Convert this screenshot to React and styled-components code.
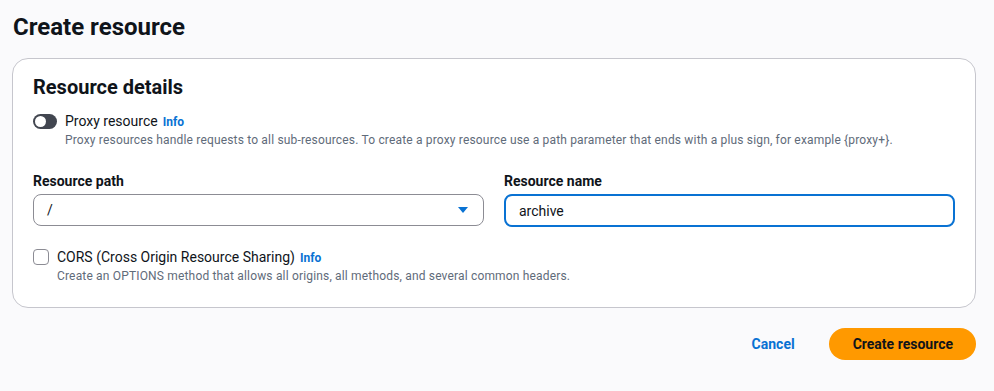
import React from 'react'
import styled, { createGlobalStyle } from 'styled-components'

const Global = createGlobalStyle`
  html, body { margin: 0; padding: 0; background: #fafafc; }
  body { font-family: Roboto, "Noto Sans", sans-serif; color: #0f141a; }
  * { box-sizing: border-box; }
`

const Page = styled.div`
  padding: 12px 18px 0 12px;
  display: flex;
  flex-direction: column;
`

const Title = styled.h1`
  margin: 0 0 0 1px;
  font-size: 24px;
  line-height: 30px;
  font-weight: 700;
`

const Card = styled.section`
  margin-top: 16px;
  background: #fff;
  border: 1px solid #c6c6cd;
  border-radius: 16px;
  padding: 16px 20px 23px 20px;
  display: flex;
  flex-direction: column;
`

const CardTitle = styled.h2`
  margin: 0;
  font-size: 20px;
  line-height: 24px;
  font-weight: 700;
`

const OptionRow = styled.div`
  display: flex;
  align-items: flex-start;
  gap: 8px;
  margin-top: ${p => p.$top}px;
`

const Toggle = styled.span`
  width: 24px;
  height: 15px;
  border-radius: 8px;
  background: #424650;
  position: relative;
  flex: none;
  margin-top: 3px;
  &::after {
    content: '';
    position: absolute;
    left: 2px;
    top: 2px;
    width: 11px;
    height: 11px;
    border-radius: 50%;
    background: #fff;
  }
`

const Checkbox = styled.span`
  width: 16px;
  height: 16px;
  border: 1px solid #8c8c94;
  border-radius: 4px;
  background: #fff;
  flex: none;
  margin-top: 2px;
`

const OptionText = styled.div`
  display: flex;
  flex-direction: column;
`

const OptionLabel = styled.div`
  font-size: 14px;
  line-height: 20px;
`

const Info = styled.a`
  color: #0972d3;
  font-size: 12px;
  font-weight: 700;
  margin-left: 5px;
`

const Description = styled.div`
  font-size: 12px;
  line-height: 16px;
  letter-spacing: 0.17px;
  color: #5f6b7a;
`

const Fields = styled.div`
  display: grid;
  grid-template-columns: 1fr 1fr;
  gap: 20px;
  margin-top: 24px;
`

const Field = styled.div`
  display: flex;
  flex-direction: column;
  gap: 4px;
`

const Label = styled.label`
  font-size: 14px;
  line-height: 18px;
  font-weight: 700;
`

const Select = styled.div`
  height: 32px;
  border: 1px solid #8c8c94;
  border-radius: 8px;
  background: #fff;
  display: flex;
  align-items: center;
  justify-content: space-between;
  padding: 0 14px 0 13px;
  font-size: 14px;
`

const Input = styled.div`
  height: 33px;
  border: 2px solid #0972d3;
  border-radius: 8px;
  background: #fff;
  display: flex;
  align-items: center;
  padding: 0 13px;
  font-size: 14px;
`

const Actions = styled.div`
  display: flex;
  justify-content: flex-end;
  align-items: center;
  gap: 34px;
  margin-top: 20px;
`

const LinkButton = styled.button`
  border: none;
  background: none;
  color: #0972d3;
  font: inherit;
  font-size: 14px;
  font-weight: 700;
  padding: 0;
`

const PrimaryButton = styled.button`
  border: none;
  background: #ff9900;
  color: #0f141a;
  font: inherit;
  font-size: 14px;
  font-weight: 700;
  height: 32px;
  padding: 0 23px 0 24px;
  border-radius: 16px;
`

export default function App() {
  return (
    <>
      <Global />
      <Page>
        <Title>Create resource</Title>
        <Card>
          <CardTitle>Resource details</CardTitle>
          <OptionRow $top={12}>
            <Toggle />
            <OptionText>
              <OptionLabel>Proxy resource<Info>Info</Info></OptionLabel>
              <Description>
                Proxy resources handle requests to all sub-resources. To create a proxy resource use a path parameter that ends with a plus sign, for example {'{proxy+}'}.
              </Description>
            </OptionText>
          </OptionRow>
          <Fields>
            <Field>
              <Label>Resource path</Label>
              <Select>
                <span>/</span>
                <svg width="12" height="8" viewBox="0 0 12 8">
                  <path d="M1 1h10L6 7z" fill="#0972d3" />
                </svg>
              </Select>
            </Field>
            <Field>
              <Label>Resource name</Label>
              <Input>archive</Input>
            </Field>
          </Fields>
          <OptionRow $top={20}>
            <Checkbox />
            <OptionText>
              <OptionLabel>CORS (Cross Origin Resource Sharing)<Info>Info</Info></OptionLabel>
              <Description>
                Create an OPTIONS method that allows all origins, all methods, and several common headers.
              </Description>
            </OptionText>
          </OptionRow>
        </Card>
        <Actions>
          <LinkButton>Cancel</LinkButton>
          <PrimaryButton>Create resource</PrimaryButton>
        </Actions>
      </Page>
    </>
  )
}
